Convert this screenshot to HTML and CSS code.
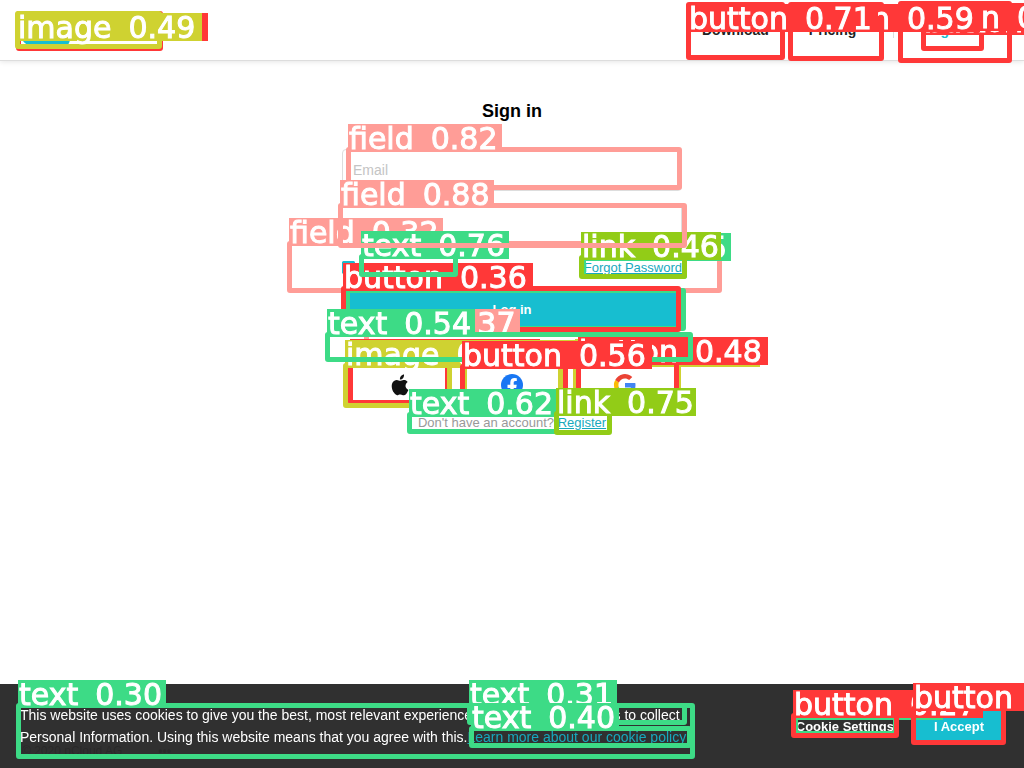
FILE: index.html
```html
<!DOCTYPE html>
<html lang="en">
<head>
<meta charset="utf-8">
<title>Sign in</title>
<link rel="stylesheet" href="styles.css">
</head>
<body>
<header class="topbar">
  <a class="logo" href="#" aria-label="pCloud">
    <svg width="50" height="30" viewBox="0 0 50 30" aria-hidden="true"><path fill="#17bed0" d="M9 30a9 9 0 0 1-2-17A10 10 0 0 1 21 7a13 13 0 0 1 23 8c6 2 8 9 4 15z"/></svg>
    <span>pCloud</span>
  </a>
  <nav class="nav">
    <a href="#">Download</a>
    <a href="#">Pricing</a>
    <a class="nav-sign" href="#">Sign in</a>
  </nav>
</header>
<main class="main">
  <form class="form">
    <h1>Sign in</h1>
    <input class="input" type="email" placeholder="Email" aria-label="Email">
    <input class="input" type="password" aria-label="Password">
    <div class="options">
      <label><input type="checkbox" checked> Remember me</label>
      <a href="#">Forgot Password</a>
    </div>
    <button class="login" type="button">Log in</button>
    <div class="social">
      <button type="button" aria-label="Apple"><svg width="24" height="24" viewBox="0 0 24 24"><path fill="#111" d="M18.500 12.800c0-2.600 2.100-3.800 2.200-3.900-1.200-1.800-3-2-3.700-2-1.600-.2-3.100.9-3.900.9s-2-.9-3.300-.9c-1.700 0-3.300 1-4.200 2.500-1.800 3.100-.5 7.700 1.300 10.200.9 1.200 1.900 2.600 3.200 2.600 1.300-.1 1.800-.8 3.400-.8s2 .8 3.400.8c1.400 0 2.300-1.300 3.100-2.500 1-1.400 1.400-2.800 1.400-2.900-.1 0-2.900-1.100-2.900-4zM16 5.200c.7-.9 1.200-2.100 1-3.700-1 0-2.300.7-3 1.500-.7.8-1.200 2-1.100 3.600 1.200.1 2.400-.6 3.100-1.400z"/></svg></button>
      <button type="button" aria-label="Facebook"><svg width="24" height="24" viewBox="0 0 24 24"><circle cx="12" cy="12" r="11" fill="#1977f3"/><path fill="#fff" d="M10.300 23v-8H7.500v-3.200h2.800V9.400c0-2.800 1.700-4.300 4.200-4.300l2.300.2V8h-1.300c-1.400 0-1.800.8-1.800 1.700v2.100h3l-.5 3.200h-2.500v8z"/></svg></button>
      <button type="button" aria-label="Google"><svg width="24" height="24" viewBox="0 0 24 24"><path fill="#ea4335" d="M12 5.400c1.600 0 3 .6 4.200 1.600l3.100-3.100A11 11 0 0 0 2.200 7l3.600 2.800C6.700 7.300 9.100 5.400 12 5.400z"/><path fill="#4285f4" d="M22.500 12.300c0-.8-.1-1.500-.2-2.200H12v4.300h5.900a5 5 0 0 1-2.200 3.300l3.500 2.700c2.100-1.900 3.300-4.700 3.300-8.100z"/><path fill="#fbbc05" d="M5.800 14.200a7 7 0 0 1 0-4.400L2.200 7a11 11 0 0 0 0 10z"/><path fill="#34a853" d="M12 23c3 0 5.500-1 7.200-2.600l-3.500-2.700A6.600 6.600 0 0 1 5.800 14.200L2.200 17A11 11 0 0 0 12 23z"/></svg></button>
    </div>
    <p class="register">Don't have an account? <a href="#">Register</a></p>
  </form>
</main>
<footer class="footer"><span>© 2020 pCloud AG</span><b>•••</b></footer>
<section class="cookies" aria-label="Cookies">
  <p>This website uses cookies to give you the best, most relevant experience. This also uses cookies to collect Personal Information. Using this website means that you agree with this.<a href="#">Learn more about our cookie policy</a></p>
  <button class="settings" type="button">Cookie Settings</button>
  <button class="accept" type="button">I Accept</button>
</section>
<div class="detections" id="detections"></div>
<script src="detections.js"></script>
</body>
</html>
```
FILE: styles.css
```css
* { box-sizing: border-box; }
body {
  margin: 0;
  min-height: 100vh;
  display: flex;
  flex-direction: column;
  font-family: "Liberation Sans", Arial, sans-serif;
  color: #111;
  background: #fff;
  overflow: hidden;
}
button { font: inherit; cursor: pointer; }
a { color: #17a9bd; }
.topbar {
  display: flex;
  align-items: center;
  justify-content: space-between;
  height: 61px;
  padding: 0 20px;
  border-bottom: 1px solid #ddd;
  box-shadow: 0 1px 5px #0000001a;
}
.logo {
  display: flex;
  align-items: center;
  gap: 10px;
  color: #111;
  font-size: 24px;
  text-decoration: none;
}
.nav { display: flex; align-items: center; font-size: 14px; font-weight: bold; }
.nav a { padding: 0 20px; color: #222; text-decoration: none; }
.nav .nav-sign { margin-left: 17px; padding: 0 30px 0 33px; border-left: 1px solid #ddd; color: #17bed0; }
.main { flex: 1; display: flex; justify-content: center; padding: 40px 20px; }
.form { width: 100%; max-width: 340px; }
h1 { margin: 0 0 28px; font-size: 18px; line-height: 20px; text-align: center; color: #000; }
.input {
  display: block;
  width: 100%;
  height: 42px;
  margin-bottom: 13px;
  padding: 0 10px;
  border: 1px solid #ddd;
  border-radius: 4px;
  font: 14px "Liberation Sans", Arial, sans-serif;
}
.input::placeholder { color: #c4c4c4; }
.options { display: flex; justify-content: space-between; align-items: center; height: 16px; font-size: 13px; }
.options label { display: flex; align-items: center; gap: 10px; }
.options input { width: 13px; height: 13px; margin: 0; accent-color: #17bed0; }
.login {
  display: block;
  width: 100%;
  height: 40px;
  margin: 14px 0 37px;
  border: 0;
  border-radius: 3px;
  background: #17bed0;
  color: #fff;
  font-size: 13px;
  font-weight: bold;
}
.social { display: grid; grid-template-columns: repeat(3, 1fr); gap: 0; }
.social button {
  display: flex;
  align-items: center;
  justify-content: center;
  height: 38px;
  padding: 0;
  border: 0;
  background: #fff;
}
.register { margin: 11px 0 0; font-size: 13px; line-height: 16px; text-align: center; color: #999; }
.footer { display: flex; gap: 36px; align-items: center; height: 34px; padding: 0 22px; font-size: 12px; color: #000; }
.cookies {
  position: fixed;
  inset: auto 0 0;
  display: flex;
  align-items: center;
  min-height: 84px;
  padding: 0 20px;
  background: #2a2a2af8;
  color: #fff;
}
.cookies p { flex: 1; max-width: 680px; margin: 0 auto 0 0; font-size: 14px; line-height: 22px; }
.cookies a { color: #17a9bd; }
.cookies button { border: 0; color: #fff; font-size: 13px; font-weight: bold; }
.settings { padding: 0; margin-right: 20px; background: none; text-decoration: underline; }
.cookies .accept { width: 90px; height: 32px; background: #17bed0; }

/* detection overlay */
.detections { position: fixed; inset: 0; overflow: hidden; pointer-events: none; }
.box { position: absolute; border: 5px solid var(--tone); border-radius: 3px; }
.tag {
  position: absolute;
  display: flex;
  gap: 17px;
  height: 28px;
  padding-left: 1px;
  background: var(--tone);
  color: #fff;
  font: 30px/30px "DejaVu Sans", sans-serif;
  -webkit-text-stroke: 1px #fff;
  white-space: nowrap;
}
.field { --tone: #ff9d97; }
.button { --tone: #ff3838; }
.text { --tone: #3ddb86; }
.image { --tone: #cfd231; }
.link { --tone: #92cc17; }
```
FILE: detections.js
```javascript
// kind, score, left, top, right, bottom; drawn from lowest score to highest
const detections = [
  ["text", "0.26", 793, 715, 898, 736],
  ["button", "0.27", 791, 713, 899, 738],
  ["button", "0.28", 911, 706, 1006, 745],
  ["button", "0.29", 921, 5, 984, 51],
  ["text", "0.30", 16, 703, 695, 759],
  ["text", "0.31", 467, 703, 687, 725],
  ["field", "0.32", 287, 241, 722, 293],
  ["text", "0.33", 345, 288, 686, 331],
  ["button", "0.34", 16, 11, 163, 51],
  ["text", "0.35", 581, 256, 687, 279],
  ["button", "0.36", 341, 286, 681, 332],
  ["field", "0.37", 364, 332, 692, 362],
  ["image", "0.38", 573, 362, 681, 408],
  ["button", "0.39", 348, 362, 450, 405],
  ["text", "0.40", 469, 726, 692, 748],
  ["image", "0.41", 462, 363, 563, 407],
  ["image", "0.42", 343, 363, 452, 408],
  ["button", "0.43", 898, 1, 1012, 63],
  ["link", "0.46", 579, 255, 687, 279],
  ["button", "0.48", 576, 360, 679, 406],
  ["image", "0.49", 15, 11, 162, 49],
  ["text", "0.54", 325, 332, 693, 362],
  ["button", "0.56", 460, 364, 568, 406],
  ["button", "0.59", 788, 2, 884, 61],
  ["text", "0.62", 407, 412, 559, 434],
  ["button", "0.71", 686, 2, 785, 60],
  ["link", "0.75", 554, 411, 612, 435],
  ["text", "0.76", 359, 254, 458, 277],
  ["field", "0.82", 346, 147, 682, 190],
  ["field", "0.88", 338, 203, 687, 248]
];
const widths = { text: 148, button: 190, field: 154, image: 185, link: 140 };
const layer = document.getElementById("detections");
for (const [kind, score, left, top, right, bottom] of detections) {
  const box = document.createElement("div");
  box.className = `box ${kind}`;
  box.style.cssText = `left:${left}px;top:${top}px;width:${right - left}px;height:${bottom - top}px`;
  const tag = document.createElement("div");
  tag.className = `tag ${kind}`;
  const tagTop = top < 23 ? top + 2 : top - 23;
  tag.style.cssText = `left:${left + 2}px;top:${tagTop}px;width:${widths[kind]}px`;
  for (const word of [kind, score]) {
    const span = document.createElement("span");
    span.textContent = word;
    tag.append(span);
  }
  layer.append(box, tag);
}
```
